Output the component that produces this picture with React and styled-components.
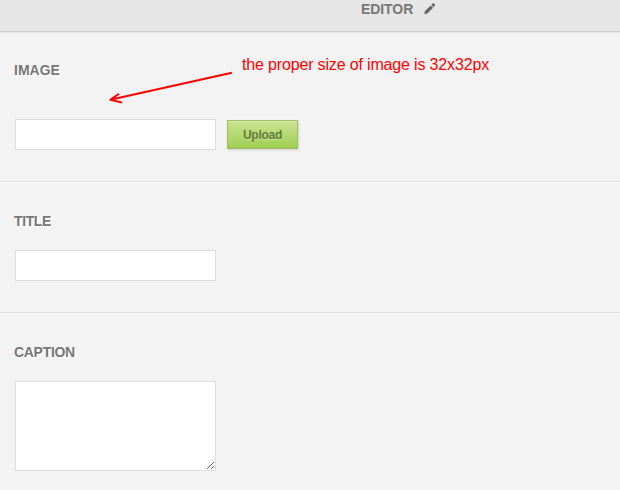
import React from 'react';
import styled, { createGlobalStyle } from 'styled-components';

const Global = createGlobalStyle`
  *{box-sizing:border-box}
  body{margin:0;background:#f3f3f3;font-family:"Liberation Sans",Arial,sans-serif;overflow:hidden}
`;
const Page = styled.main`
  position:relative;width:620px;height:490px;overflow:hidden;background:#f3f3f3;
`;
const Header = styled.header`
  height:32px;display:flex;align-items:flex-start;padding-left:361px;gap:11px;
  background:#e6e6e6;border-bottom:1px solid #cfcfcf;box-shadow:0 1px 1px #e4e4e4;
  color:#777;font-size:14px;font-weight:bold;line-height:18px;letter-spacing:-.08px;
`;
const Pencil = styled.svg`width:12px;height:12px;margin-top:3px;`;
const Section = styled.section`
  height:${p => p.$h}px;padding:${p => p.$top}px 0 0 14px;
  border-bottom:1px solid #dcdcdc;box-shadow:0 1px 0 #fff;
`;
const Label = styled.label`
  display:block;height:16px;margin-bottom:${p => p.$gap}px;
  color:#777;font-size:14px;font-weight:bold;line-height:16px;
  letter-spacing:${p => p.$tracking || 0}px;text-shadow:2px 1px 0 #fff,1px 1px 0 #fff;
`;
const Row = styled.div`display:flex;align-items:flex-start;gap:11px;padding-left:1px;`;
const Input = styled.input`
  width:201px;height:31px;border:1px solid #ddd;border-radius:0;background:#fff;outline:0;padding:4px;
`;
const Area = styled.textarea`
  display:block;width:201px;height:90px;border:1px solid #ddd;background:#fff;outline:0;resize:both;
`;
const Upload = styled.button`
  width:71px;height:29px;margin-top:1px;padding:0;border:1px solid #9cbd62;
  background:linear-gradient(#cbe393,#a0ce52);
  box-shadow:inset 0 1px 0 #d6eaa9,1px 1px 2px #d0d0d0;
  color:#5f7b34;font:bold 12px "Liberation Sans",Arial,sans-serif;letter-spacing:-.25px;
  text-shadow:0 1px 0 #c8e28e;
`;
const Note = styled.div`
  position:absolute;left:242px;top:55px;color:#f00;font-size:16px;line-height:19px;
  letter-spacing:-.16px;white-space:nowrap;
`;
const Arrow = styled.svg`position:absolute;left:100px;top:65px;`;

export default function App() {
  return <><Global /><Page>
    <Header><span>EDITOR</span><Pencil viewBox="0 0 12 12"><path d="M.3 11.2 1 8 6.7 2.4 9.1 4.8 3.4 10.4ZM7.3 1.8 8.6.6Q9.3 0 10 .6L10.8 1.4Q11.4 2.1 10.8 2.8L9.7 4.2Z" fill="#666"/></Pencil></Header>
    <Section $h={150} $top={30}><Label $gap={41}>IMAGE</Label><Row><Input aria-label="Image"/><Upload>Upload</Upload></Row></Section>
    <Section $h={131} $top={31}><Label $gap={21} $tracking={-.4}>TITLE</Label><Row><Input aria-label="Title"/></Row></Section>
    <Section $h={190} $top={31}><Label $gap={21} $tracking={-.3}>CAPTION</Label><Row><Area aria-label="Caption"/></Row></Section>
    <Note>the proper size of image is 32x32px</Note>
    <Arrow width="135" height="42" fill="none" stroke="#f00" strokeWidth="2" strokeLinejoin="round"><path d="M131.8 7.7 10.3 34.8M19 28.8 10.3 34.8 22 37.4"/></Arrow>
  </Page></>;
}
